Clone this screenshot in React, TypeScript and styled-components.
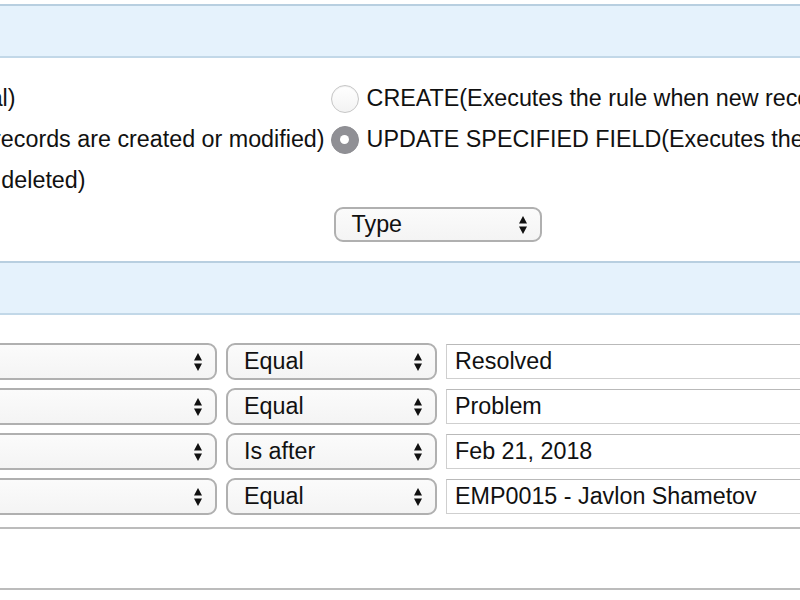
import { Fragment } from "react";
import styled, { createGlobalStyle } from "styled-components";

const GlobalStyle = createGlobalStyle`
  html, body {
    margin: 0;
    padding: 0;
    background: #ffffff;
    overflow: hidden;
  }
  body {
    font-family: "Liberation Sans", Arial, Helvetica, sans-serif;
    font-size: 23.3px;
    color: #111111;
  }
`;

const Page = styled.div`
  width: 800px;
  height: 600px;
  overflow: hidden;
  display: flex;
  flex-direction: column;
`;

const SectionBand = styled.div<{ $top: number }>`
  margin-top: ${({ $top }) => $top}px;
  height: 50px;
  flex-shrink: 0;
  background: #e5f2fc;
  border-top: 2px solid #b8cfe0;
  border-bottom: 2px solid #c2d8e8;
`;

// the page is scrolled sideways: the left column starts off screen
const TriggerGrid = styled.div`
  margin-top: 20px;
  margin-left: -506px;
  display: grid;
  grid-template-columns: max-content max-content;
  column-gap: 6px;
  white-space: nowrap;
`;

const RadioOption = styled.label`
  height: 41px;
  display: flex;
  align-items: center;
  gap: 8px;
`;

const RadioDot = styled.span<{ $checked?: boolean }>`
  box-sizing: border-box;
  width: 28px;
  height: 28px;
  flex-shrink: 0;
  border-radius: 50%;
  display: flex;
  align-items: center;
  justify-content: center;
  border: 1px solid ${({ $checked }) => ($checked ? "#8d8d92" : "#c6c6c6")};
  background: ${({ $checked }) =>
    $checked ? "#909095" : "linear-gradient(#ffffff, #f3f3f3)"};
  box-shadow: ${({ $checked }) =>
    $checked ? "none" : "inset 0 1px 1px rgba(0, 0, 0, 0.06)"};

  &::after {
    content: "";
    width: 9px;
    height: 9px;
    border-radius: 50%;
    background: #ffffff;
    display: ${({ $checked }) => ($checked ? "block" : "none")};
  }
`;

const FieldCell = styled.div`
  margin-top: 6px;
  margin-left: 3px;
`;

const SelectBox = styled.div<{ $width: number; $height: number }>`
  box-sizing: border-box;
  width: ${({ $width }) => $width}px;
  height: ${({ $height }) => $height}px;
  flex-shrink: 0;
  display: flex;
  align-items: center;
  justify-content: space-between;
  padding: 0 12px 0 16px;
  border: 2px solid #b0b0b0;
  border-radius: 9px;
  background: linear-gradient(#fbfbfb, #f4f4f4);
  color: #111111;
`;

const TextBox = styled.div`
  box-sizing: border-box;
  width: 420px;
  height: 35px;
  flex-shrink: 0;
  display: flex;
  align-items: center;
  padding: 0 8px;
  border: 1px solid #cfcfcf;
  border-top-color: #b9b9b9;
  background: #ffffff;
  white-space: nowrap;
`;

const ConditionList = styled.div`
  margin-top: 28px;
  margin-left: -60px;
  display: flex;
  flex-direction: column;
  gap: 8px;
`;

const ConditionRow = styled.div`
  display: flex;
  align-items: center;
  gap: 9px;
`;

const NotesBox = styled.div`
  margin-top: 12px;
  margin-left: -10px;
  width: 820px;
  height: 59px;
  flex-shrink: 0;
  border-top: 2px solid #bcbcbc;
  border-bottom: 2px solid #bcbcbc;
  background: #ffffff;
`;

const Arrows = () => (
  <svg width="10" height="20" viewBox="0 0 10 20" aria-hidden="true">
    <path d="M1 8.5 L5 1 L9 8.5 Z" fill="#111" />
    <path d="M1 11.5 L9 11.5 L5 19 Z" fill="#111" />
  </svg>
);

type SelectProps = { value?: string; width: number; height?: number };

const Select = ({ value = "", width, height = 37 }: SelectProps) => (
  <SelectBox $width={width} $height={height}>
    <span>{value}</span>
    <Arrows />
  </SelectBox>
);

const triggers = [
  {
    left: "SCHEDULED(Executes the rule at the interval)",
    right: "CREATE(Executes the rule when new records are created)",
    leftChecked: false,
    rightChecked: false,
  },
  {
    left: "CREATE AND EDIT(Executes the rule when records are created or modified)",
    right: "UPDATE SPECIFIED FIELD(Executes the rule when a specified field is updated)",
    leftChecked: false,
    rightChecked: true,
  },
];

const conditions = [
  { field: "Status", operator: "Equal", value: "Resolved" },
  { field: "Category", operator: "Equal", value: "Problem" },
  { field: "Resolved Date", operator: "Is after", value: "Feb 21, 2018" },
  { field: "Assigned To", operator: "Equal", value: "EMP0015 - Javlon Shametov" },
];

export default function App() {
  return (
    <Page>
      <GlobalStyle />
      <SectionBand $top={4} />
      <TriggerGrid>
        {triggers.map((t) => (
          <Fragment key={t.left}>
            <RadioOption>
              <RadioDot $checked={t.leftChecked} />
              {t.left}
            </RadioOption>
            <RadioOption>
              <RadioDot $checked={t.rightChecked} />
              {t.right}
            </RadioOption>
          </Fragment>
        ))}
        <RadioOption>
          <RadioDot />
          DELETE(Executes the rule when records are deleted)
        </RadioOption>
        <span />
        <span />
        <FieldCell>
          <Select value="Type" width={208} height={35} />
        </FieldCell>
      </TriggerGrid>
      <SectionBand $top={19} />
      <ConditionList>
        {conditions.map((c) => (
          <ConditionRow key={c.value}>
            <Select width={277} />
            <Select value={c.operator} width={211} />
            <TextBox>{c.value}</TextBox>
          </ConditionRow>
        ))}
      </ConditionList>
      <NotesBox />
    </Page>
  );
}
